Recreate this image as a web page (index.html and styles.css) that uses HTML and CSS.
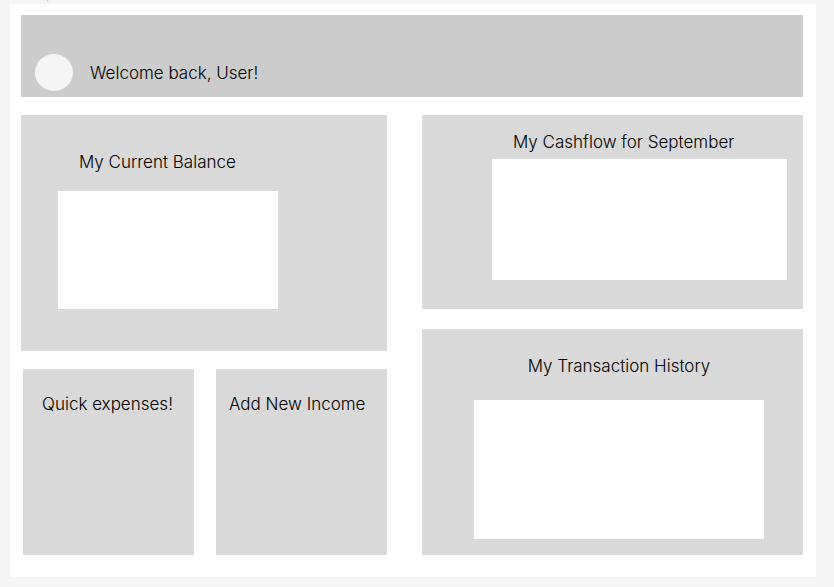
FILE: index.html
```html
<!DOCTYPE html>
<html lang="en">
<head>
<meta charset="utf-8">
<meta name="viewport" content="width=device-width, initial-scale=1">
<title>Dashboard</title>
<link rel="stylesheet" href="styles.css">
</head>
<body>
<div class="frame">
  <span class="frame-label">Desktop</span>
  <header class="banner">
    <div class="avatar"></div>
    <h1 class="title">Welcome back, User!</h1>
  </header>
  <main class="board">
    <div class="column column-left">
      <section class="card balance">
        <h2 class="title">My Current Balance</h2>
        <div class="panel"></div>
      </section>
      <div class="actions">
        <section class="card expenses">
          <h2 class="title">Quick expenses!</h2>
        </section>
        <section class="card income">
          <h2 class="title">Add New Income</h2>
        </section>
      </div>
    </div>
    <div class="column column-right">
      <section class="card cashflow">
        <h2 class="title">My Cashflow for September</h2>
        <div class="panel"></div>
      </section>
      <section class="card history">
        <h2 class="title">My Transaction History</h2>
        <div class="panel"></div>
      </section>
    </div>
  </main>
</div>
</body>
</html>
```
FILE: styles.css
```css
* {
  box-sizing: border-box;
}

body {
  margin: 0;
  padding: 4px 18px 10px 10px;
  background: #f5f5f5;
  color: #000;
  font-family: Inter, "Liberation Sans", sans-serif;
}

.frame {
  position: relative;
  padding: 11px 13px 22px 11px;
  background: #fff;
}

/* Sits above the frame, mostly scrolled out of the window */
.frame-label {
  position: absolute;
  bottom: 100%;
  left: 0;
  color: #b3b3b3;
  font-size: 11px;
  line-height: 18px;
}

.title {
  margin: 0;
  font-size: 17px;
  font-weight: 300;
  line-height: 22px;
  white-space: nowrap;
}

.banner {
  display: flex;
  align-items: center;
  gap: 17px;
  padding: 39px 14px 6px;
  background: #ccc;
}

.avatar {
  width: 38px;
  height: 37px;
  border-radius: 50%;
  background: #f5f5f5;
}

.board {
  display: grid;
  grid-template-columns: 366fr 381fr;
  gap: 35px;
  margin-top: 18px;
}

.column {
  display: flex;
  flex-direction: column;
}

.column-left {
  gap: 18px;
}

.column-right {
  gap: 20px;
}

.card {
  display: flex;
  flex-direction: column;
  background: #d9d9d9;
}

.panel {
  background: #fff;
}

.balance {
  gap: 18px;
  padding: 36px 109px 42px 37px;
}

.balance .title,
.cashflow .title {
  padding-left: 21px;
}

.balance .panel {
  height: 118px;
}

.actions {
  display: grid;
  flex: 1;
  grid-template-columns: 1fr 1fr;
  gap: 22px;
  margin-left: 2px;
}

.expenses {
  padding: 24px 19px;
}

.income {
  padding: 24px 13px;
}

.cashflow {
  gap: 6px;
  padding: 16px 16px 29px 70px;
}

.cashflow .panel {
  height: 121px;
}

.history {
  gap: 23px;
  padding: 26px 39px 16px 52px;
}

.history .title {
  text-align: center;
}

.history .panel {
  height: 139px;
}
```
